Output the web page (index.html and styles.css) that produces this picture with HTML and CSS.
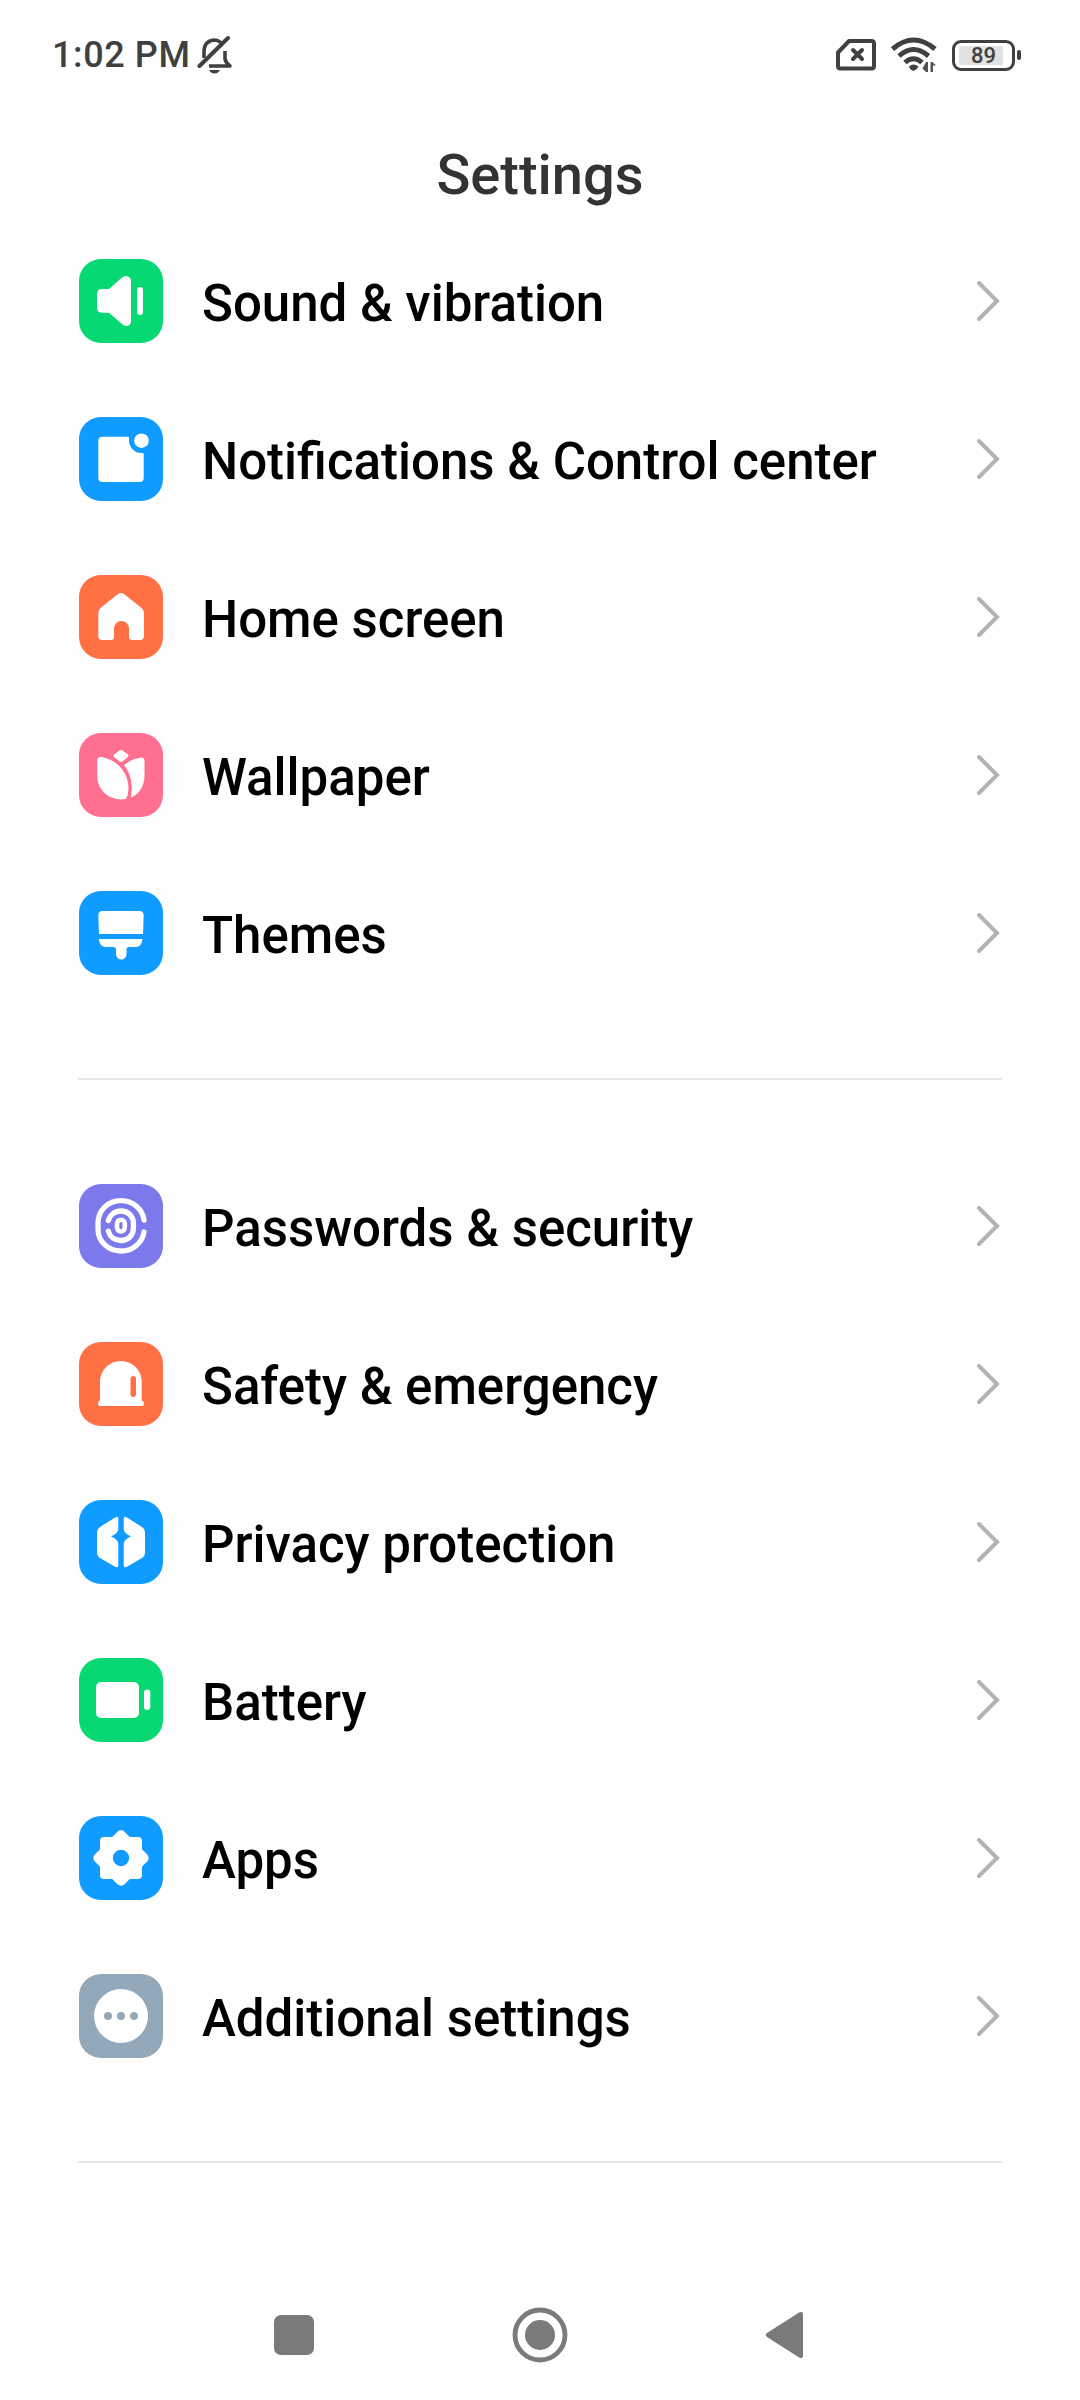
FILE: index.html
```html
<!DOCTYPE html>
<html lang="en">
<head>
    <meta charset="UTF-8">
    <title>Settings</title>
    <link rel="stylesheet" href="styles.css">
</head>
<body>
    <div class="status-bar">
        <span class="time">1:02 PM</span>
        <svg class="bell" width="36" height="40" viewBox="0 0 36 40">
            <path d="M7 23V17Q7 6 17 5Q22 5 25 9M28 16V24Q29 28 33 31H12" fill="none" stroke="#404040" stroke-width="3.6" stroke-linejoin="round"/>
            <path d="M2.500 31L31 3" stroke="#404040" stroke-width="4" stroke-linecap="round"/>
            <path d="M12 35H23Q21 38.500 17.500 38.500T12 35Z" fill="#404040"/>
        </svg>
        <div class="status-icons">
            <svg width="40" height="32" viewBox="0 0 40 32">
                <path d="M13 2H35.500Q38 2 38 4.500V27Q38 29.500 35.500 29.500H4.500Q2 29.500 2 27V13.500Z" fill="none" stroke="#404040" stroke-width="4" stroke-linejoin="round"/>
                <path d="M17 11L26 20M26 11L17 20" stroke="#404040" stroke-width="4" stroke-linecap="round"/>
            </svg>
            <svg class="wifi" width="46" height="36" viewBox="0 0 46 36">
                <path d="M1.500 12Q22.500 -6 44 12M8 19Q22.500 6 37.500 19M14 25.500Q22.500 18 31 25.500" fill="none" stroke="#404040" stroke-width="5"/>
                <path d="M18 29.500Q22.500 25.500 27.500 29.500Q26 33 22.700 34Q19 33 18 29.500Z" fill="#404040"/>
                <path d="M32 30.500L35 25H37V35H35L31.500 31.500ZM39.500 25H41.500L45 28.500H42V35H39.500Z" fill="#404040" opacity=".9"/>
            </svg>
            <div class="battery"><span class="battery-level">89</span></div>
        </div>
    </div>

    <h1 class="title">Settings</h1>

    <div class="group">
        <div class="row">
            <svg class="icon green" viewBox="0 0 84 84">
                <path d="M23 30H30L43 18.500Q46 16 49 17.500Q52 19 52 22V62Q52 66 48.500 67Q45.500 67.500 43 65L30 53.700H23Q18 53.700 18 48.500V35Q18 30 23 30Z"/>
                <rect x="58" y="28" width="6" height="28" rx="3"/>
            </svg>
            <span class="label">Sound &amp; vibration</span>
            <svg class="chevron" viewBox="0 0 26 42"><path d="M3 3L21 21L3 39"/></svg>
        </div>
        <div class="row">
            <svg class="icon blue" viewBox="0 0 84 84">
                <path d="M23.500 19.700H49Q50 19.700 50 20.700V23.700A12.500 12.500 0 0 0 62.500 36H63.500Q64.700 36 64.700 37.200V61Q64.700 65 60.700 65H23.500Q19.300 65 19.300 61V24Q19.300 19.700 23.500 19.700Z"/>
                <circle cx="62.500" cy="23.700" r="7.300"/>
            </svg>
            <span class="label">Notifications &amp; Control center</span>
            <svg class="chevron" viewBox="0 0 26 42"><path d="M3 3L21 21L3 39"/></svg>
        </div>
        <div class="row">
            <svg class="icon orange" viewBox="0 0 84 84">
                <path d="M39 19Q42 17 45 19L62 32.500Q65 35 65 38V61Q65 65 61 65H53Q50 65 50 62V53.500A7.500 7.500 0 0 0 35 53.500V62Q35 65 32 65H23.500Q19.300 65 19.300 61V38Q19.300 35 22 32.500Z"/>
            </svg>
            <span class="label">Home screen</span>
            <svg class="chevron" viewBox="0 0 26 42"><path d="M3 3L21 21L3 39"/></svg>
        </div>
        <div class="row">
            <svg class="icon pink" viewBox="0 0 84 84">
                <path d="M40.500 17.500Q42 16.300 43.500 17.500L49 21.500Q50 22.800 49 24L43 28.700Q42 29.300 41 28.700L35 24Q34 22.800 35 21.500Z"/>
                <path d="M18.300 27Q18.300 23.700 22 24C38 26 49.500 40 49.500 55Q49.500 61 47.500 65Q46.800 66.300 45 66.300C30 67.500 18.300 57 18.300 43Z"/>
                <path d="M45 32Q52 26 62 24.500Q65.500 24 65.500 28V43C65.500 52 61 60 53 64.200Q51.800 64.700 52 63.500C54 52 52 41 45 32Z"/>
            </svg>
            <span class="label">Wallpaper</span>
            <svg class="chevron" viewBox="0 0 26 42"><path d="M3 3L21 21L3 39"/></svg>
        </div>
        <div class="row">
            <svg class="icon blue" viewBox="0 0 84 84">
                <path d="M23.500 20H60.500Q64.700 20 64.700 24.500L64 43H20L19.300 24.500Q19.300 20 23.500 20Z"/>
                <path d="M20 48H63.300V49Q62.500 56 57 56H50Q47.500 56 47.500 58.500V63.300A5.250 5.250 0 0 1 37 63.300V58.500Q37 56 34.500 56H26.500Q21 56 20 49Z"/>
            </svg>
            <span class="label">Themes</span>
            <svg class="chevron" viewBox="0 0 26 42"><path d="M3 3L21 21L3 39"/></svg>
        </div>
    </div>

    <div class="group">
        <div class="row">
            <svg class="icon purple" viewBox="0 0 84 84">
                <g class="lines">
                    <path d="M65 36C63.500 25 54 16.700 42 16.700C29 16.700 19 26.500 19 39V45C19 57.500 29 67 42 67C54 67 63.500 58.500 65 48"/>
                    <path d="M29.300 36.500C31 31 36 27 42 27C49.500 27 54.400 32.500 54.400 39.500V44C54.400 51 49.500 56.500 42 56.500C36 56.500 31 53 29.300 47.300"/>
                    <rect x="38" y="35.700" width="7.800" height="11.800" rx="3.900" stroke-width="4.600"/>
                </g>
            </svg>
            <span class="label">Passwords &amp; security</span>
            <svg class="chevron" viewBox="0 0 26 42"><path d="M3 3L21 21L3 39"/></svg>
        </div>
        <div class="row">
            <svg class="icon orange" viewBox="0 0 84 84">
                <path fill-rule="evenodd" d="M21 39.500A20.850 20.500 0 0 1 62.700 39.500V58.500Q65 59 65 61.500Q65 64 63 64H21Q19 64 19 61.500Q19 59 21 58.500ZM54.200 34Q51.500 34 51.500 36.700V52.300Q51.500 55 54.200 55Q57 55 57 52.300V36.700Q57 34 54.200 34Z"/>
            </svg>
            <span class="label">Safety &amp; emergency</span>
            <svg class="chevron" viewBox="0 0 26 42"><path d="M3 3L21 21L3 39"/></svg>
        </div>
        <div class="row">
            <svg class="icon blue" viewBox="0 0 84 84">
                <path d="M36.500 17.300Q39.300 16 39.300 18.500V29Q39.300 33 32 36.500Q39.300 39.500 39.300 44V65.500Q39.300 68 36.500 67L21 58Q18 56 18 53V32Q18 29 21 27Z"/>
                <path d="M47.500 17.300Q44.700 16 44.700 18.500V29Q44.700 33 52 36.500Q44.700 39.500 44.700 44V65.500Q44.700 68 47.500 67L63 58Q66 56 66 53V32Q66 29 63 27Z"/>
            </svg>
            <span class="label">Privacy protection</span>
            <svg class="chevron" viewBox="0 0 26 42"><path d="M3 3L21 21L3 39"/></svg>
        </div>
        <div class="row">
            <svg class="icon green" viewBox="0 0 84 84">
                <rect x="17" y="24" width="43" height="36" rx="5"/>
                <rect x="65" y="31.500" width="6.300" height="20.500" rx="3.150"/>
            </svg>
            <span class="label">Battery</span>
            <svg class="chevron" viewBox="0 0 26 42"><path d="M3 3L21 21L3 39"/></svg>
        </div>
        <div class="row">
            <svg class="icon blue" viewBox="0 0 84 84">
                <rect x="21" y="21" width="42" height="42" rx="4"/>
                <rect x="21" y="21" width="42" height="42" rx="5" transform="rotate(45 42 42)"/>
                <circle class="hole" cx="42" cy="42" r="8.200"/>
            </svg>
            <span class="label">Apps</span>
            <svg class="chevron" viewBox="0 0 26 42"><path d="M3 3L21 21L3 39"/></svg>
        </div>
        <div class="row">
            <svg class="icon gray" viewBox="0 0 84 84">
                <circle cx="42" cy="42" r="27"/>
                <g class="hole">
                    <circle cx="29" cy="42" r="4"/>
                    <circle cx="42" cy="42" r="4"/>
                    <circle cx="55" cy="42" r="4"/>
                </g>
            </svg>
            <span class="label">Additional settings</span>
            <svg class="chevron" viewBox="0 0 26 42"><path d="M3 3L21 21L3 39"/></svg>
        </div>
    </div>

    <div class="nav-bar">
        <svg viewBox="0 0 60 60"><rect x="10" y="10" width="40" height="40" rx="7"/></svg>
        <svg viewBox="0 0 60 60">
            <circle class="ring" cx="30" cy="30" r="25"/>
            <circle cx="30" cy="30" r="15"/>
        </svg>
        <svg viewBox="0 0 60 60"><path d="M11 28L43.500 7.300Q47 6 47 9V51Q47 54 43.500 52.700L11 32Q8.500 30 11 28Z"/></svg>
    </div>
</body>
</html>
```
FILE: styles.css
```css
* {
    box-sizing: border-box;
}
body {
    margin: 0;
    width: 1080px;
    height: 2400px;
    display: flex;
    flex-direction: column;
    background: #fefefe;
    font-family: Roboto, sans-serif;
    overflow: hidden;
}
svg {
    display: block;
    flex-shrink: 0;
}

/* status bar */
.status-bar {
    display: flex;
    align-items: center;
    height: 110px;
    padding: 0 58px 0 52px;
    color: #404040;
}
.time {
    font-size: 36px;
    font-weight: 500;
    letter-spacing: 0.6px;
    white-space: nowrap;
}
.bell {
    margin-left: 7px;
}
.status-icons {
    display: flex;
    align-items: center;
    margin-left: auto;
}
.wifi {
    margin-left: 15px;
}
.battery {
    display: flex;
    align-items: center;
    width: 70px;
    margin-left: 15px;
}
.battery-level {
    width: 63px;
    height: 31px;
    border: 3px solid #404040;
    border-radius: 9px;
    background: linear-gradient(90deg, #e2e2e2 44px, transparent 44px) 4px 3px / 49px 19px no-repeat;
    font-size: 22px;
    font-weight: 500;
    line-height: 26px;
    text-align: center;
}
.battery::after {
    content: "";
    width: 4px;
    height: 10px;
    margin-left: 2px;
    border-radius: 2px;
    background: #404040;
}

.title {
    height: 112px;
    margin: 0;
    padding-top: 18px;
    line-height: 94px;
    font-size: 56px;
    font-weight: 500;
    text-align: center;
    color: #333;
}

/* settings list */
.group {
    margin: 0 78px;
    padding-bottom: 66px;
    border-bottom: 2px solid #e6e6e6;
}
.group + .group {
    padding-top: 67px;
}
.row {
    display: flex;
    align-items: center;
    height: 158px;
    padding-left: 1px;
}
.icon {
    width: 84px;
    height: 84px;
    border-radius: 22px;
    fill: #fff;
}
.green {
    background: #06d974;
}
.blue {
    background: #0f9bff;
}
.blue .hole {
    fill: #0f9bff;
}
.orange {
    background: #ff7044;
}
.pink {
    background: #ff7090;
}
.purple {
    background: #7c79ec;
}
.gray {
    background: #93a8b8;
}
.gray .hole {
    fill: #93a8b8;
}
.lines {
    fill: none;
    stroke: #fff;
    stroke-width: 5.3;
    stroke-linecap: round;
}
.label {
    flex: 1;
    padding: 5px 0 0 39px;
    font-size: 51px;
    font-weight: 500;
    color: #000;
    white-space: nowrap;
}
.chevron {
    width: 26px;
    height: 42px;
    fill: none;
    stroke: #b3b3b3;
    stroke-width: 4;
    stroke-linecap: round;
}

/* bottom navigation */
.nav-bar {
    display: flex;
    justify-content: space-between;
    height: 130px;
    margin-top: auto;
    padding: 35px 264px;
    fill: #7a7a7a;
}
.nav-bar svg {
    width: 60px;
    height: 60px;
}
.ring {
    fill: none;
    stroke: #7a7a7a;
    stroke-width: 4.8;
}
```
